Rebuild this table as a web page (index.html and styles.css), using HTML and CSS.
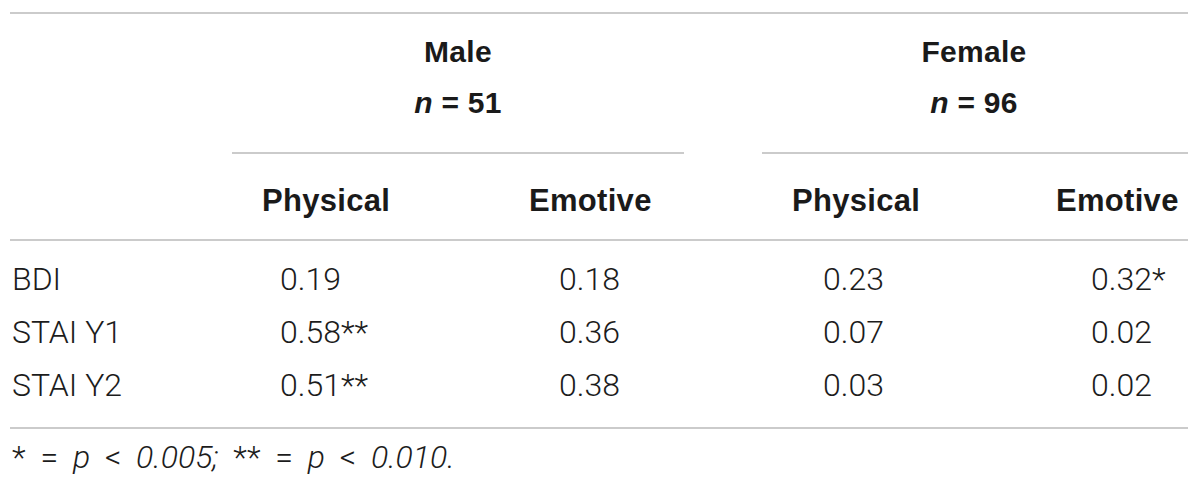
FILE: index.html
```html
<!DOCTYPE html>
<html>
<head>
<meta charset="utf-8">
<link rel="stylesheet" href="styles.css">
</head>
<body>
<div class="page">
  <div class="tbl">
    <div class="rule span-all"></div>

    <div class="spacer"></div>
    <div class="grp grp-male">
      <div class="grp-title">Male</div>
      <div class="grp-n"><i>n</i> = 51</div>
    </div>
    <div class="spacer"></div>
    <div class="grp grp-female">
      <div class="grp-title">Female</div>
      <div class="grp-n"><i>n</i> = 96</div>
    </div>

    <div class="hd lbl"></div>
    <div class="hd c-mp">Physical</div>
    <div class="hd c-me">Emotive</div>
    <div class="hd gap"></div>
    <div class="hd c-fp">Physical</div>
    <div class="hd c-fe">Emotive</div>
    <div class="rule span-all"></div>

    <div class="cell lbl first">BDI</div>
    <div class="cell v-mp first">0.19</div>
    <div class="cell v-me first">0.18</div>
    <div class="cell gap first"></div>
    <div class="cell v-fp first">0.23</div>
    <div class="cell v-fe first">0.32*</div>

    <div class="cell lbl">STAI Y1</div>
    <div class="cell v-mp">0.58**</div>
    <div class="cell v-me">0.36</div>
    <div class="cell gap"></div>
    <div class="cell v-fp">0.07</div>
    <div class="cell v-fe">0.02</div>

    <div class="cell lbl last">STAI Y2</div>
    <div class="cell v-mp last">0.51**</div>
    <div class="cell v-me last">0.38</div>
    <div class="cell gap last"></div>
    <div class="cell v-fp last">0.03</div>
    <div class="cell v-fe last">0.02</div>
    <div class="rule span-all"></div>
  </div>
  <p class="note">* = <i>p</i> &lt; <i>0.005;</i> ** = <i>p</i> &lt; <i>0.010.</i></p>
</div>
</body>
</html>
```
FILE: styles.css
```css
html, body {
  margin: 0;
  padding: 0;
  background: #ffffff;
}

.page {
  padding: 12px 12px 0 10px;
  width: 1178px;
}

.tbl {
  display: grid;
  grid-template-columns: 222px 297px 155px 78px 296px 130px;
  color: #222;
}

.rule {
  height: 2px;
  background: #cbcbcb;
}

.span-all {
  grid-column: 1 / -1;
}

.grp {
  font-family: "Liberation Sans", Arial, sans-serif;
  font-weight: bold;
  font-size: 30px;
  letter-spacing: 0.3px;
  color: #1a1a1a;
  text-align: center;
  line-height: 51px;
  padding: 12px 0 24px;
  border-bottom: 2px solid #cbcbcb;
}

.grp-male {
  grid-column: span 2;
}

.grp-female {
  grid-column: span 2;
  padding-right: 2px;
}

.grp-n i {
  font-style: italic;
}

.hd {
  font-family: "Liberation Sans", Arial, sans-serif;
  font-weight: bold;
  font-size: 31px;
  letter-spacing: 0.3px;
  color: #1a1a1a;
  line-height: 50px;
  padding: 22px 0 13px;
  white-space: nowrap;
}

.hd.c-mp, .hd.c-fp {
  padding-left: 30px;
}

.hd.c-fe {
  margin-left: -2px;
}

.cell {
  font-family: Roboto, "Liberation Sans", Arial, sans-serif;
  font-weight: 300;
  font-size: 32px;
  line-height: 53px;
  white-space: nowrap;
  color: #1c1c1c;
}

.cell.first {
  padding-top: 12px;
}

.cell.last {
  padding-bottom: 15px;
}

.cell.lbl {
  padding-left: 2px;
}

.v-mp { padding-left: 48px; }
.v-me { padding-left: 30px; }
.v-fp { padding-left: 61px; }
.v-fe { padding-left: 33px; }

.note {
  margin: 8px 0 0;
  padding-left: 2px;
  font-family: Roboto, "Liberation Sans", Arial, sans-serif;
  font-weight: 300;
  font-size: 32px;
  line-height: 40px;
  word-spacing: 7px;
  color: #1c1c1c;
}

.note i {
  font-style: italic;
}
```
